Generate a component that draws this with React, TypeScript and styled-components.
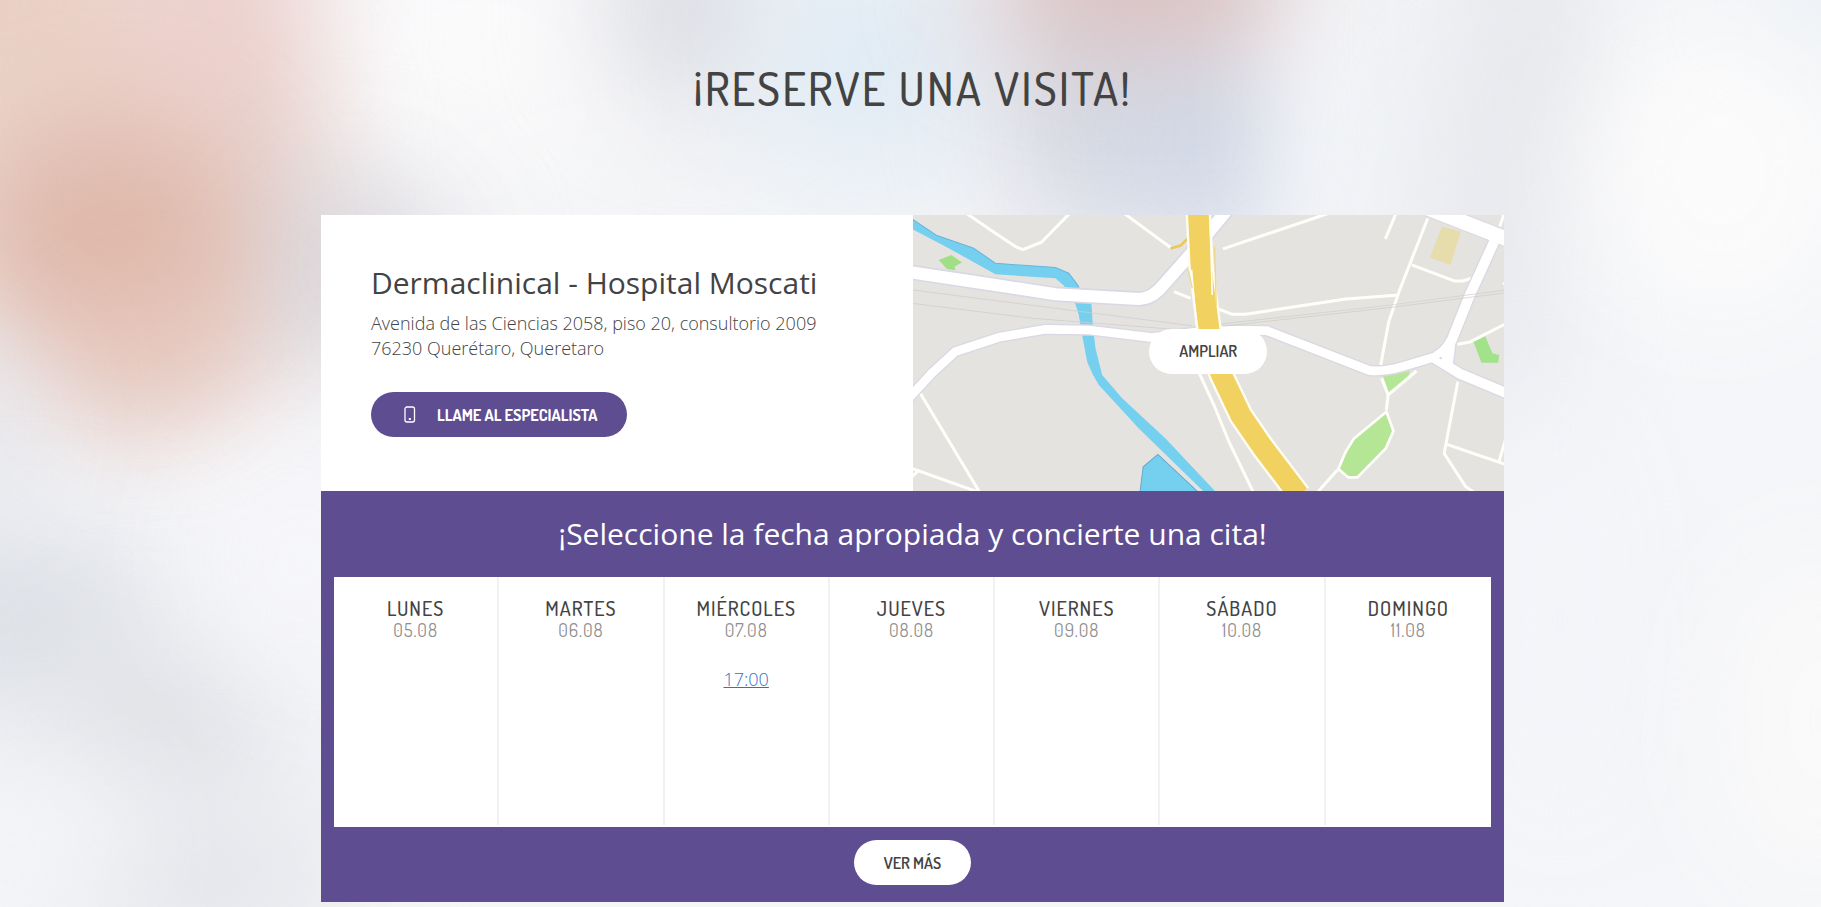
import React from "react";
import styled, { createGlobalStyle } from "styled-components";

const BODY_FONT = '"Open Sans", "Noto Sans", sans-serif';
const DISPLAY_FONT = 'Dosis, "Liberation Sans Narrow", "Arial Narrow", "Liberation Sans", sans-serif';
const PURPLE = "#5e4d91";
const INK = "#434343";

const GlobalStyle = createGlobalStyle`
  *, *::before, *::after { box-sizing: border-box; }
  body {
    margin: 0;
    background: #f5f6f9;
    color: ${INK};
    font-family: ${BODY_FONT};
  }
`;

const Page = styled.main`
  position: relative;
  min-height: 100vh;
  padding: 58px 12px 5px 16px;
  overflow: hidden;
`;

const Backdrop = styled.svg`
  position: absolute;
  inset: 0;
  z-index: -1;
  width: 100%;
  height: 100%;
`;

const Title = styled.h1`
  margin: 0 0 97px;
  font-family: ${DISPLAY_FONT};
  font-size: 46px;
  font-weight: 500;
  line-height: 60px;
  letter-spacing: 2px;
  text-align: center;
  text-transform: uppercase;
`;

const Card = styled.section`
  max-width: 1183px;
  margin: 0 auto;
  background: ${PURPLE};
`;

const Summary = styled.div`
  display: grid;
  grid-template-columns: repeat(2, minmax(0, 1fr));
  background: #fff;
  @media (max-width: 800px) {
    grid-template-columns: minmax(0, 1fr);
  }
`;

const Info = styled.div`
  padding: 48px 50px 54px;
`;

const ClinicName = styled.h2`
  margin: 0 0 8px;
  font-size: 30px;
  font-weight: 400;
  line-height: 40px;
`;

const Address = styled.address`
  margin-bottom: 31px;
  font-size: 18px;
  font-style: normal;
  font-weight: 300;
  line-height: 25px;
`;

const PillButton = styled.button<{ $primary?: boolean }>`
  display: inline-flex;
  align-items: center;
  gap: 18px;
  height: 45px;
  padding: 0 30px;
  border: 0;
  border-radius: 23px;
  background: ${(p) => (p.$primary ? PURPLE : "#fff")};
  color: ${(p) => (p.$primary ? "#fff" : INK)};
  font-family: ${DISPLAY_FONT};
  font-size: 16px;
  font-weight: ${(p) => (p.$primary ? 700 : 600)};
  text-transform: uppercase;
  white-space: nowrap;
  cursor: pointer;
`;

const MapPanel = styled.div`
  position: relative;
  display: flex;
  align-items: center;
  justify-content: center;
  min-height: 276px;
  padding-bottom: 4px;
`;

const MapDrawing = styled.svg`
  position: absolute;
  inset: 0;
  width: 100%;
  height: 100%;
`;

const MapAction = styled.div`
  position: relative;
`;

const Booking = styled.div`
  padding: 22px 13px 17px;
  text-align: center;
`;

const BookingTitle = styled.h2`
  margin: 0 0 22px;
  color: #fff;
  font-size: 30px;
  font-weight: 400;
  line-height: 42px;
`;

const Calendar = styled.table`
  width: 100%;
  margin-bottom: 13px;
  padding-bottom: 2px;
  border-spacing: 0;
  table-layout: fixed;
  background: #fff;
`;

const DayHead = styled.th`
  height: 80px;
  padding: 19px 0 0;
  border-right: 2px solid #f1f1f0;
  font-family: ${DISPLAY_FONT};
  font-size: 20px;
  font-weight: 500;
  line-height: 24px;
  letter-spacing: 1px;
  vertical-align: top;
  text-transform: uppercase;
  &:last-child { border-right: 0; }
`;

const DayDate = styled.time`
  display: block;
  color: #8f8f8f;
  font-size: 18px;
  font-weight: 400;
  line-height: 20px;
`;

const SlotCell = styled.td`
  height: 168px;
  padding: 10px 0 0;
  border-right: 2px solid #f1f1f0;
  vertical-align: top;
  &:last-child { border-right: 0; }
`;

const Slot = styled.a`
  color: #3372c4;
  font-size: 18px;
  font-weight: 300;
  line-height: 25px;
`;

type Blob = [number, number, number, number, string, number];

const BLOBS: Blob[] = [
  [480, 100, 190, 180, "#fafafb", 1],
  [700, 220, 260, 70, "#f3f4f6", 1],
  [120, 200, 200, 200, "#e7cdc5", 1],
  [-20, 0, 200, 130, "#ead0c3", 1],
  [210, 20, 100, 150, "#ecd0cc", 1],
  [350, 270, 110, 100, "#d8d6dc", 0.9],
  [110, 240, 120, 100, "#deb6a7", 1],
  [160, 360, 100, 70, "#e6c5ba", 0.8],
  [-40, 430, 80, 100, "#e4e5ea", 0.9],
  [20, 620, 140, 90, "#dcdfe5", 1],
  [160, 720, 130, 90, "#e0e2e6", 1],
  [200, 880, 160, 80, "#e4e5ea", 1],
  [50, 840, 80, 80, "#f4f5f8", 1],
  [300, 560, 100, 120, "#f6f6fa", 0.9],
  [690, 10, 80, 90, "#d8d9df", 1],
  [870, 60, 120, 120, "#e0ebf4", 1],
  [1090, 110, 90, 130, "#d3d5de", 0.9],
  [1200, 140, 90, 120, "#ccd4e4", 0.9],
  [1150, -20, 170, 60, "#d5b5b4", 1],
  [1370, 130, 70, 190, "#f2f4f7", 1],
  [1530, 40, 70, 160, "#e6e7eb", 1],
  [1490, 260, 60, 190, "#e6e7ec", 1],
  [1720, 170, 130, 150, "#fbfbfb", 1],
  [1840, -20, 80, 40, "#e4ebf0", 1],
  [1560, 620, 60, 220, "#f3f4f9", 1],
  [1820, 720, 110, 180, "#f9f9f9", 1],
];

function BackdropDrawing() {
  return (
    <Backdrop viewBox="0 0 1821 907" preserveAspectRatio="none" aria-hidden="true">
      <defs>
        <filter id="soft" x="-300%" y="-300%" width="700%" height="700%" colorInterpolationFilters="sRGB">
          <feGaussianBlur stdDeviation="58" />
        </filter>
      </defs>
      {BLOBS.map(([cx, cy, rx, ry, fill, opacity], i) => (
        <ellipse key={i} cx={cx} cy={cy} rx={rx} ry={ry} fill={fill} opacity={opacity} filter="url(#soft)" />
      ))}
    </Backdrop>
  );
}

const SIDE_STREETS = [
  "M155-10 250 55 310 95 332 104 388 82 478-10",
  "M635-5 775 98",
  "M785 230 835 250",
  "M25 535 205 835",
  "M0 760 210 835M0 785 18 768",
  "M850 450 905 570 950 680 1025 835",
  "M932 102 1250-5",
  "M1451-5 1419 72",
  "M1546 10 1460 230 1429 320 1405 450",
  "M1498 150 1625 198 1650 198 1684 188",
  "M918 282 960 298 1000 298 1300 252 1460 240",
  "M1635 388 1670 382 1780 326",
  "M1408 490 1427 540 1422 585M1512 468 1427 540",
  "M1636 500 1595 715 1660 815 1690 835",
  "M1603 688 1780 748M1760 738 1780 670",
  "M1275 765 1212 835",
  "M1762 35 1775-5M1772 208 1785 200",
];

const WEST_ROAD = "M-10 171 250 210 430 238 680 252Q712 252 740 225L835 118 945-15";

const RING_ROAD =
  "M-10 550 60 474 130 410 260 367 400 343 530 345 720 368 900 345 1064 347 1370 466Q1410 472 1470 455L1570 425";

const EAST_ROADS =
  "M1570 425Q1600 410 1618 375L1670 245 1745 80M1560 425 1640 475 1790 538M1615 375 1605 455";

const HIGHWAY = "M858-10 866 150 890 340Q900 420 928 480L985 600 1050 695 1160 840";

function CityMap() {
  return (
    <MapDrawing viewBox="3 0 1773 828" preserveAspectRatio="xMidYMid slice" role="img" aria-label="Mapa">
      <rect x="0" width="1780" height="828" fill="#e5e3df" />
      <path
        d="M0 12 75 62 185 100 250 145 430 158 470 175 500 215 538 268 542 330 550 400 570 480 630 550 760 670 915 835H880L680 640 560 510 540 475 525 440 510 360 500 300 490 268 455 212 430 190 250 178 110 100 0 42Z"
        fill="#75d0f0"
      />
      <path
        d="M0 12 75 62 185 100 250 145 430 158 470 175 500 215"
        fill="none"
        stroke="#69b4da"
        strokeWidth="3"
      />
      <path d="M683 835 693 755 737 718 862 835Z" fill="#75d0f0" stroke="#6aa7cb" strokeWidth="3" />
      <path d="M80 135 118 120 150 143 128 155 130 166 105 162Z" fill="#a1df86" />
      <path d="M1589 35 1645 50 1614 150 1552 128Z" fill="#e7dcab" />
      <path d="M1412 484 1492 468 1488 485 1429 530Z" fill="#b4e696" />
      <path
        d="M1422 590 1443 648 1420 700 1335 787H1308L1278 762 1300 710 1325 670Z"
        fill="#b4e696"
        stroke="#fffffb"
        strokeWidth="8"
        strokeLinejoin="round"
      />
      <path d="M1683 380 1718 364 1740 415 1760 420 1757 443H1707Z" fill="#a1e28a" />
      <g fill="none" stroke="#fffffa" strokeWidth="9" strokeLinejoin="round">
        {SIDE_STREETS.map((d) => (
          <path key={d} d={d} />
        ))}
      </g>
      <g fill="none" strokeLinejoin="round">
        <path d={WEST_ROAD} stroke="#d9d8e4" strokeWidth="46" />
        <path d={RING_ROAD} stroke="#d9d8e4" strokeWidth="34" />
        <path d={EAST_ROADS} stroke="#d9d8e4" strokeWidth="38" />
        <path d="M1545-20 1790 75" stroke="#d9d8e4" strokeWidth="50" />
        <path d={WEST_ROAD} stroke="#fff" strokeWidth="36" />
        <path d={RING_ROAD} stroke="#fff" strokeWidth="26" />
        <path d={EAST_ROADS} stroke="#fff" strokeWidth="30" />
        <path d="M1545-20 1790 75" stroke="#fff" strokeWidth="44" />
      </g>
      <g fill="none" stroke="#cfcecb" strokeWidth="3" opacity="0.75">
        <path d="M0 225 840 332M0 265 360 310 880 350" />
        <path d="M930 334 1420 279 1790 232M930 326 1420 272 1790 224" />
      </g>
      <circle cx="1585" cy="429" r="4" fill="#dcdce6" />
      <path d="M775 101 805 92 825 72" fill="none" stroke="#e8ca5c" strokeWidth="8" />
      <g fill="none" strokeLinejoin="round">
        <path d={HIGHWAY} stroke="#fffdf2" strokeWidth="76" />
        <path d={HIGHWAY} stroke="#f1d15f" strokeWidth="62" />
        <path d="M893-5 900 240M838 165 852 330" stroke="#fffdf2" strokeWidth="5" />
        <path d="M907 95 912 270M828 165 840 220" stroke="#efd68a" strokeWidth="4" />
      </g>
    </MapDrawing>
  );
}

function PhoneIcon() {
  return (
    <svg width="18" height="18" viewBox="0 0 18 18" fill="none" stroke="#fff" aria-hidden="true">
      <rect x="4" y="1" width="9.5" height="15" rx="2" strokeWidth="1.3" />
      <rect x="7.8" y="12" width="2" height="2" fill="#fff" stroke="none" />
    </svg>
  );
}

const DAYS = [
  { name: "Lunes", date: "05.08", slots: [] },
  { name: "Martes", date: "06.08", slots: [] },
  { name: "Miércoles", date: "07.08", slots: ["17:00"] },
  { name: "Jueves", date: "08.08", slots: [] },
  { name: "Viernes", date: "09.08", slots: [] },
  { name: "Sábado", date: "10.08", slots: [] },
  { name: "Domingo", date: "11.08", slots: [] },
];

export default function App() {
  return (
    <>
      <GlobalStyle />
      <Page>
        <BackdropDrawing />
        <Title>¡Reserve una visita!</Title>
        <Card>
          <Summary>
            <Info>
              <ClinicName>Dermaclinical - Hospital Moscati</ClinicName>
              <Address>
                Avenida de las Ciencias 2058, piso 20, consultorio 2009
                <br />
                76230 Querétaro, Queretaro
              </Address>
              <PillButton type="button" $primary>
                <PhoneIcon />
                Llame al especialista
              </PillButton>
            </Info>
            <MapPanel>
              <CityMap />
              <MapAction>
                <PillButton type="button">Ampliar</PillButton>
              </MapAction>
            </MapPanel>
          </Summary>
          <Booking>
            <BookingTitle>¡Seleccione la fecha apropiada y concierte una cita!</BookingTitle>
            <Calendar>
              <thead>
                <tr>
                  {DAYS.map((day) => (
                    <DayHead key={day.date} scope="col">
                      {day.name}
                      <DayDate>{day.date}</DayDate>
                    </DayHead>
                  ))}
                </tr>
              </thead>
              <tbody>
                <tr>
                  {DAYS.map((day) => (
                    <SlotCell key={day.date}>
                      {day.slots.map((slot) => (
                        <Slot key={slot} href="#reservar">
                          {slot}
                        </Slot>
                      ))}
                    </SlotCell>
                  ))}
                </tr>
              </tbody>
            </Calendar>
            <PillButton type="button">Ver más</PillButton>
          </Booking>
        </Card>
      </Page>
    </>
  );
}
